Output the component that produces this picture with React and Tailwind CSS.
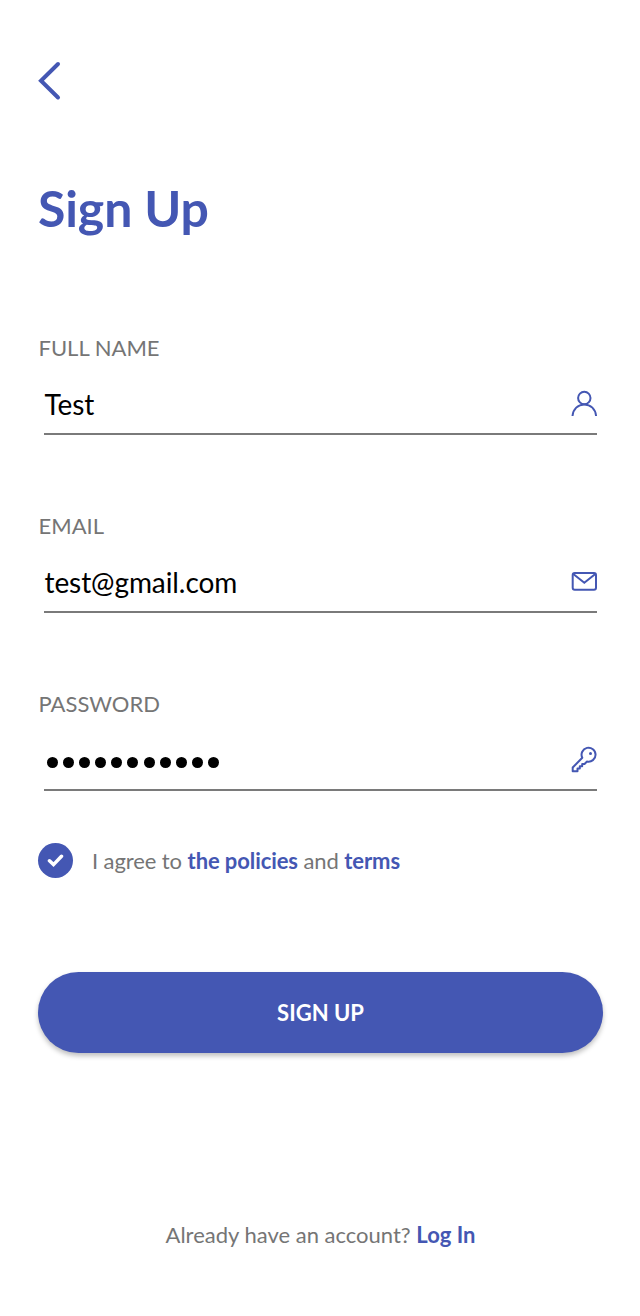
import React from "react";

const icons = {
  user: (
    <svg className="block h-[28px] w-[28px]" viewBox="0 0 28 28" fill="none" stroke="#4457b3" strokeWidth="2">
      <circle cx="14.3" cy="8" r="6.2" />
      <path d="M2.500 26C3 19.200 8 14.400 14.300 14.400S25.600 19.200 26.100 26" />
    </svg>
  ),
  mail: (
    <svg className="block h-[28px] w-[28px]" viewBox="0 0 28 28" fill="none" stroke="#4457b3" strokeWidth="2">
      <rect x="2.700" y="5" width="23.300" height="16.800" rx="2" />
      <path d="M3.300 6l11 8.800L25.300 6" />
    </svg>
  ),
  key: (
    <svg className="block h-[28px] w-[28px]" viewBox="0 0 28 28" fill="none" stroke="#4457b3" strokeWidth="2" strokeLinejoin="round">
      <path d="M2.700 21.500L12.300 11.800A7 7 0 1 1 17 15.500L14.500 18H12.200V20.300H9.800V22.600H7.500V25.300H2.700Z" />
      <circle cx="20.500" cy="7.500" r="1.500" fill="#4457b3" stroke="none" />
    </svg>
  ),
};

function Field({ label, icon, children }) {
  return (
    <div className="h-[178px]">
      <div className="h-[32px] pl-[0.500px] text-[22px] leading-[32px] text-[#757575]">{label}</div>
      <div className="ml-[6px] mt-[13px] flex h-[58px] w-[553px] items-start justify-between border-b-2 border-[#7a7a7a]">
        {children}
        <div className="-mr-[1px] mt-[13px]">{icons[icon]}</div>
      </div>
    </div>
  );
}

export default function App() {
  return (
    <main className="flex h-[1316px] w-[640px] flex-col bg-white px-[38px] font-['Lato',sans-serif]">
      <svg className="mt-[61px] block h-[40px] w-[24px] shrink-0" viewBox="0 0 24 40" fill="none" stroke="#4457b3" strokeWidth="4" strokeLinecap="round">
        <path d="M20 3L3 19.700l17 16.800" />
      </svg>
      <h1 className="mt-[77px] h-[60px] text-[50px] font-bold leading-[60px] tracking-[-0.100px] text-[#4457b3]">Sign Up</h1>
      <div className="mt-[94px]">
        <Field label="FULL NAME" icon="user">
          <span className="mt-[7px] pl-[0.500px] text-[28px] leading-[40px] tracking-[-0.080px] text-black">Test</span>
        </Field>
        <Field label="EMAIL" icon="mail">
          <span className="mt-[7px] pl-[0.500px] text-[28px] leading-[40px] tracking-[-0.080px] text-black">test@gmail.com</span>
        </Field>
        <Field label="PASSWORD" icon="key">
          <div className="ml-[3px] mt-[24px] flex gap-[5.100px]">
            {Array.from({ length: 11 }, (_, i) => (
              <span key={i} className="h-[11px] w-[11px] rounded-full bg-black" />
            ))}
          </div>
        </Field>
      </div>
      <div className="-mt-[23px] flex h-[35px] items-center">
        <span className="flex h-[35px] w-[35px] items-center justify-center rounded-full bg-[#4457b3]">
          <svg className="h-[14px] w-[17px]" viewBox="0 0 17 14" fill="none" stroke="white" strokeWidth="3.500" strokeLinecap="round">
            <path d="M2.500 6.800l4 3.800L14.500 2.300" />
          </svg>
        </span>
        <p className="ml-[19px] whitespace-nowrap text-[22px] tracking-[-0.090px] text-[#757575]">
          I agree to <b className="text-[#4457b3]">the policies</b> and <b className="text-[#4457b3]">terms</b>
        </p>
      </div>
      <button className="mt-[94px] h-[81px] w-[565px] shrink-0 rounded-full bg-[#4457b3] text-[22px] font-bold text-white shadow-[0_3px_5px_rgba(0,0,0,0.250)]">SIGN UP</button>
      <p className="mt-[166px] pl-[1px] text-center text-[22px] leading-[32px] text-[#757575]">
        Already have an account? <b className="text-[#4457b3]">Log In</b>
      </p>
    </main>
  );
}
